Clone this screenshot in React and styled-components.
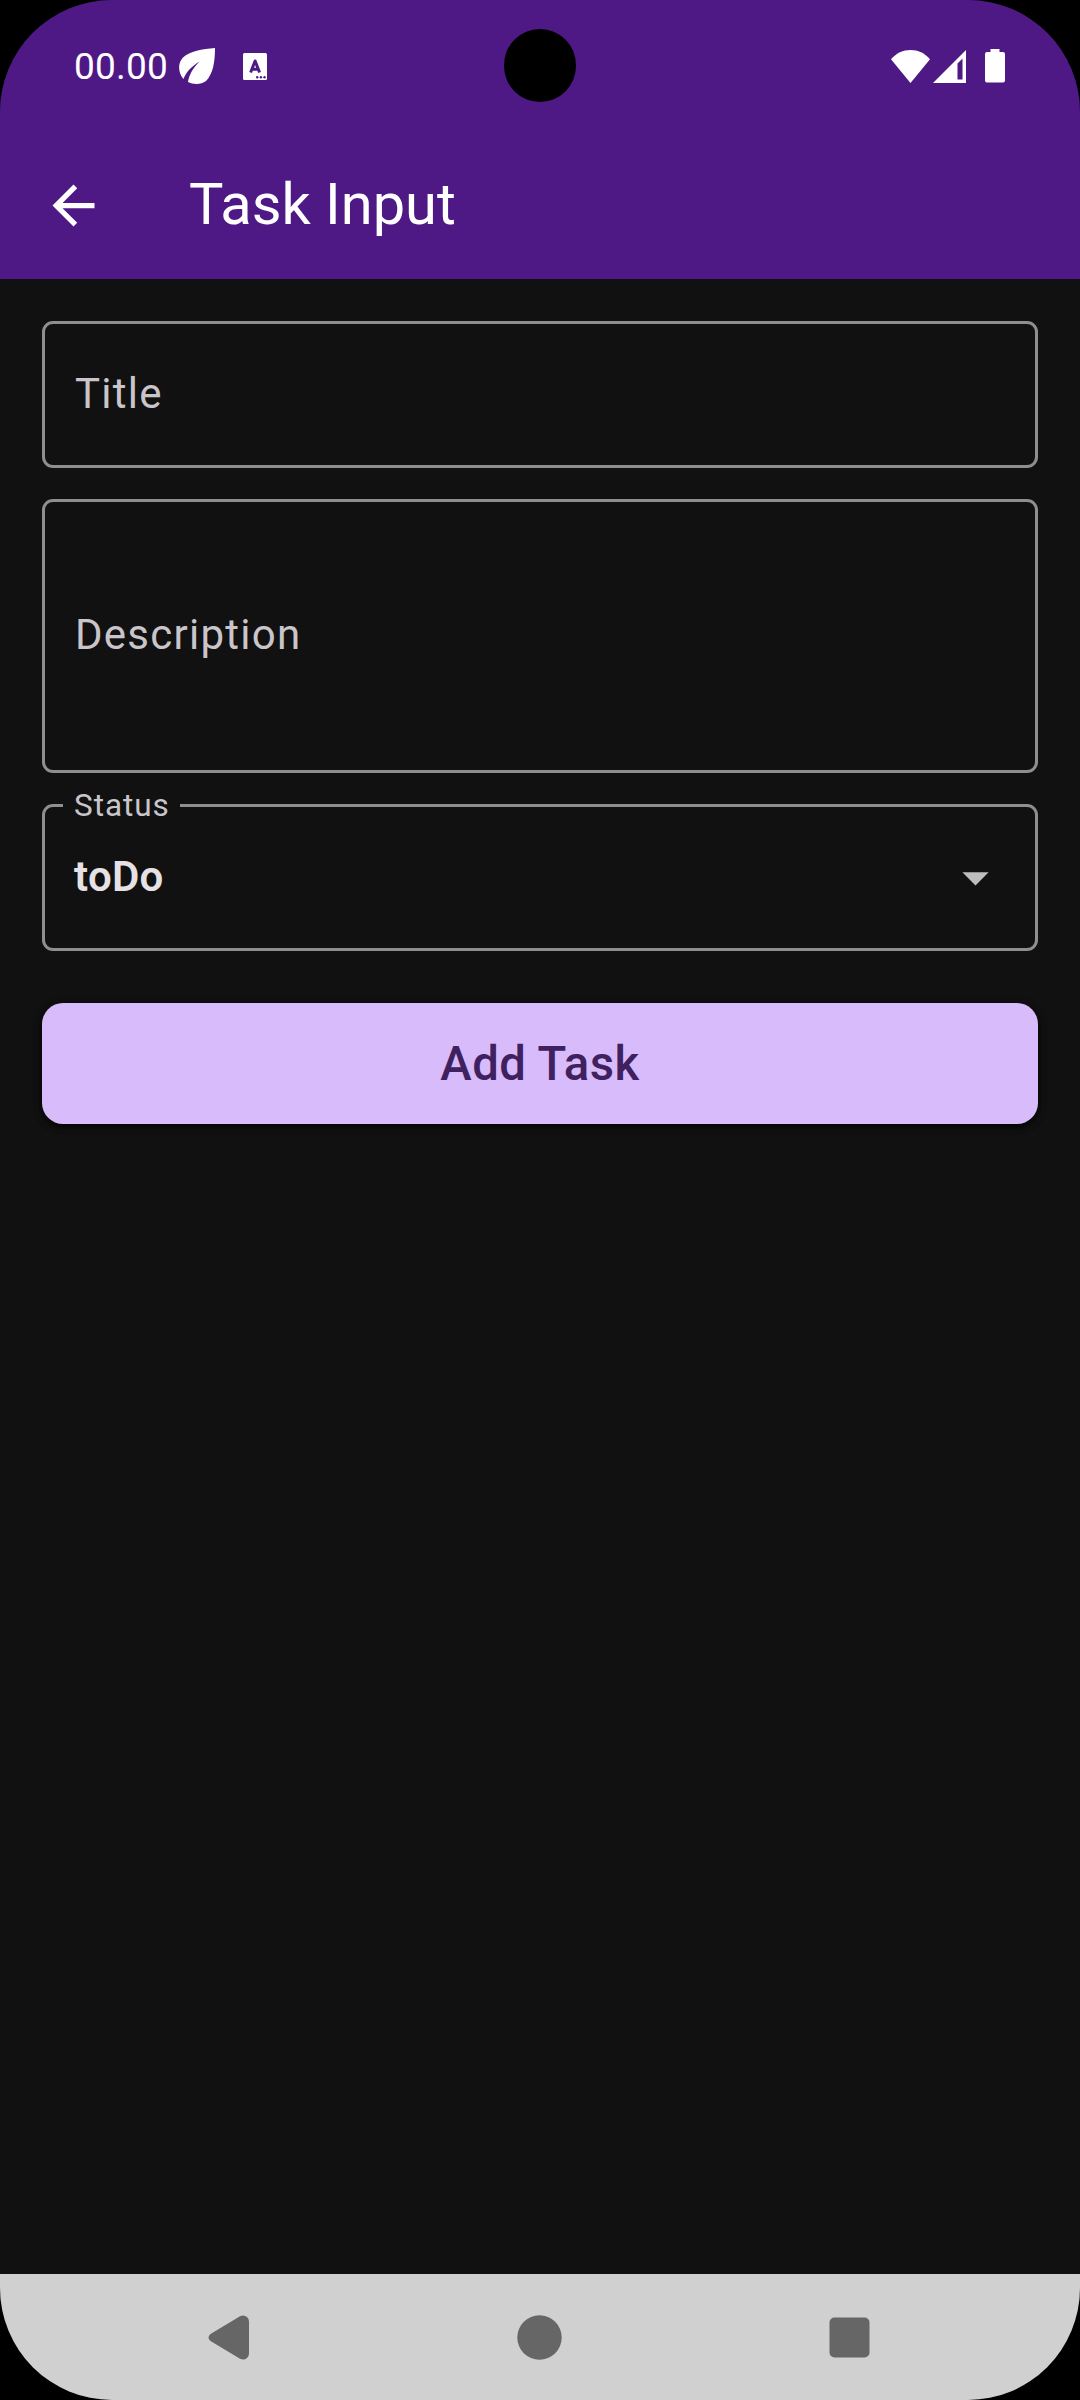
import React from "react";
import styled, { createGlobalStyle } from "styled-components";

const Global = createGlobalStyle`
  *, *::before, *::after { box-sizing: border-box; }
  html, body { margin: 0; padding: 0; background: #000; }
  body { font-family: Roboto, "Liberation Sans", sans-serif; }
`;

const Screen = styled.div`
  position: relative;
  width: 1080px;
  height: 2400px;
  display: flex;
  flex-direction: column;
  overflow: hidden;
  background: #111111;
  border-radius: 112px;
`;

const Header = styled.header`
  flex: none;
  height: 279px;
  background: #4f1985;
  color: #fff;
`;

const StatusBar = styled.div`
  height: 132px;
  padding: 0 75px 0 74px;
  display: flex;
  align-items: center;
  justify-content: space-between;
`;

const StatusGroup = styled.div`
  display: flex;
  align-items: center;
`;

const Clock = styled.span`
  width: 93px;
  padding-top: 2px;
  font-size: 37px;
  line-height: 44px;
  letter-spacing: 0.2px;
`;

const Glyph = styled.svg`
  display: block;
  flex: none;
  width: ${(p) => p.$w}px;
  height: ${(p) => p.$h}px;
  margin-left: ${(p) => p.$gap || 0}px;
  fill: ${(p) => p.$color || "#fff"};
`;

const Camera = styled.div`
  position: absolute;
  top: 29px;
  left: 503.5px;
  width: 72.5px;
  height: 72.5px;
  border-radius: 50%;
  background: #000;
`;

const AppBar = styled.div`
  height: 147px;
  padding-left: 42px;
  display: flex;
  align-items: center;
`;

const BackButton = styled.button`
  display: block;
  padding: 0;
  border: 0;
  background: none;
  cursor: pointer;
`;

const PageTitle = styled.h1`
  margin: 0 0 0 84px;
  padding-bottom: 4px;
  font-size: 57.75px;
  line-height: 74px;
  font-weight: 400;
`;

const Form = styled.form`
  flex: 1;
  padding: 42px;
  display: flex;
  flex-direction: column;
`;

const Field = styled.label`
  flex: none;
  display: flex;
  align-items: center;
  height: ${(p) => p.$height}px;
  margin-bottom: 31px;
  padding: 0 30px ${(p) => p.$lift}px;
  border: 3px solid #8f8f8f;
  border-radius: 11px;
`;

const Hint = styled.span`
  font-size: 42px;
  line-height: 63px;
  letter-spacing: 1.25px;
  color: #c9c5ca;
`;

const SelectField = styled.fieldset`
  flex: none;
  min-width: 0;
  height: 164px;
  margin: -17px 0 52px;
  padding: 0 28px 0 18px;
  border: 3px solid #8f8f8f;
  border-radius: 11px;
`;

const Legend = styled.legend`
  height: 37px;
  padding: 0 10px 0 11px;
  font-size: 31.5px;
  line-height: 37px;
  letter-spacing: 0.95px;
  color: #c9c5ca;
`;

const SelectRow = styled.div`
  display: flex;
  align-items: center;
  justify-content: space-between;
  height: 106px;
  padding-left: 11px;
`;

const SelectValue = styled.span`
  padding-bottom: 2px;
  font-size: 42px;
  line-height: 63px;
  font-weight: 600;
  letter-spacing: 0.3px;
  color: #e6e1e5;
`;

const SubmitButton = styled.button`
  flex: none;
  height: 121px;
  padding: 0;
  border: 0;
  border-radius: 21px;
  background: #d8bbfa;
  box-shadow: 0 3px 6px rgba(0, 0, 0, 0.75), 0 1px 10px rgba(0, 0, 0, 0.35);
  font-family: inherit;
  font-size: 47.25px;
  line-height: 56px;
  font-weight: 500;
  letter-spacing: 0.5px;
  color: #3f2160;
  cursor: pointer;
`;

const NavBar = styled.nav`
  flex: none;
  height: 126px;
  padding: 0 210px 0 208px;
  display: flex;
  align-items: center;
  justify-content: space-between;
  background: #d0d0d0;
`;

export default function App() {
  return (
    <>
      <Global />
      <Screen>
        <Header>
          <StatusBar>
            <StatusGroup>
              <Clock>00.00</Clock>
              <Glyph $w={36} $h={36} $gap={12} viewBox="0 0 36 36">
                <path d="M36 0C36 14 34 26 27 33C22 37 14 36.500 9 34C10 27 14 20 20.500 13.500C13 18 7 24 4.500 31C-1 25 -1.500 15 4 9.500C11 3 23 1 36 0Z" />
              </Glyph>
              <Glyph $w={24} $h={27} $gap={28} viewBox="0 0 24 27">
                <path d="M1.500 0H22.500Q24 0 24 1.500V25.500Q24 27 22.500 27H1.500Q0 27 0 25.500V1.500Q0 0 1.500 0Z" />
                <path
                  d="M7.600 19.500L12.100 8L16.600 19.500M9 16.300H15"
                  fill="none"
                  stroke="#4f1985"
                  strokeWidth="3"
                  strokeLinejoin="round"
                />
                <circle cx="14.200" cy="24.200" r="1.200" fill="#4f1985" />
                <circle cx="17.900" cy="24.200" r="1.200" fill="#4f1985" />
                <circle cx="21.500" cy="24.200" r="1.200" fill="#4f1985" />
              </Glyph>
            </StatusGroup>
            <StatusGroup>
              <Glyph $w={39} $h={33} viewBox="0 0 39 33">
                <path d="M0 9.300C5.500 3 12 0 19.500 0S33.500 3 39 9.300L19.500 33Z" />
              </Glyph>
              <Glyph $w={33} $h={33} $gap={3} viewBox="0 0 33 33">
                <path
                  fillRule="evenodd"
                  d="M33 0V33H0ZM29.500 8.500L24.500 13.500V29.500H29.500Z"
                />
              </Glyph>
              <Glyph $w={20} $h={34} $gap={19} viewBox="0 0 20 34">
                <path d="M5.500 0H14.500V3H18Q20 3 20 5V31.500Q20 33.500 18 33.500H2Q0 33.500 0 31.500V5Q0 3 2 3H5.500Z" />
              </Glyph>
            </StatusGroup>
          </StatusBar>
          <AppBar>
            <BackButton type="button" aria-label="Back">
              <Glyph $w={63} $h={63} viewBox="0 0 24 24">
                <path d="M20 11H7.830l5.590-5.590L12 4l-8 8 8 8 1.410-1.410L7.830 13H20v-2z" />
              </Glyph>
            </BackButton>
            <PageTitle>Task Input</PageTitle>
          </AppBar>
        </Header>
        <Camera />
        <Form onSubmit={(e) => e.preventDefault()}>
          <Field $height={147} $lift={2}>
            <Hint>Title</Hint>
          </Field>
          <Field $height={274} $lift={4}>
            <Hint>Description</Hint>
          </Field>
          <SelectField>
            <Legend>Status</Legend>
            <SelectRow>
              <SelectValue>toDo</SelectValue>
              <Glyph $w={63} $h={63} $color="#bdbdbd" viewBox="0 0 24 24">
                <path d="M7 10l5 5 5-5z" />
              </Glyph>
            </SelectRow>
          </SelectField>
          <SubmitButton type="submit">Add Task</SubmitButton>
        </Form>
        <NavBar>
          <Glyph $w={41} $h={45} $color="#666" viewBox="0 0 41 45">
            <path d="M2.500 19L32 1.200Q36 -0.600 39 2Q41 3.500 41 6.500V38.500Q41 41.500 39 43Q36 45.600 32 43.800L2.500 26Q-1.500 22.500 2.500 19Z" />
          </Glyph>
          <Glyph $w={45} $h={45} $color="#666" viewBox="0 0 45 45">
            <circle cx="22.500" cy="22.500" r="22.200" />
          </Glyph>
          <Glyph $w={41} $h={41} $color="#666" viewBox="0 0 41 41">
            <rect x="0.500" y="0.500" width="40" height="40" rx="5" />
          </Glyph>
        </NavBar>
      </Screen>
    </>
  );
}
